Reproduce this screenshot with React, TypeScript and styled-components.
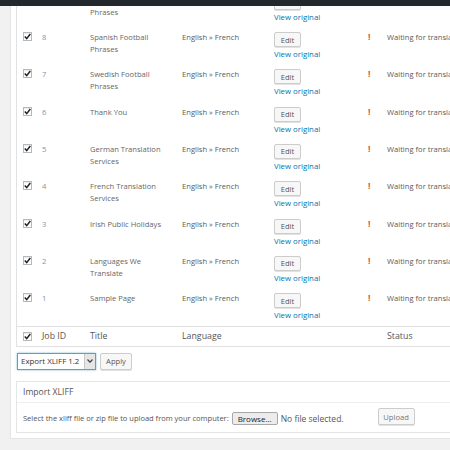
import React from "react";
import styled, { createGlobalStyle } from "styled-components";

const GlobalStyle = createGlobalStyle`
  html, body {
    margin: 0;
    padding: 0;
    background: #f1f1f1;
    overflow: hidden;
  }
  body {
    font-family: "Open Sans", "Liberation Sans", sans-serif;
    color: #555;
  }
`;

const AdminBar = styled.div`
  position: fixed;
  top: 0;
  left: 0;
  right: 0;
  height: 6px;
  background: #23282d;
  z-index: 10;
`;

const Page = styled.div`
  width: 450px;
  height: 450px;
  overflow: hidden;
  padding-left: 10px;
  box-sizing: border-box;
`;

const Panel = styled.div`
  width: 640px;
  margin-top: -10.33px;
  background: #fff;
  border-left: 1px solid #e5e5e5;
  border-bottom: 1px solid #e5e5e5;
  padding: 0 0 5px 5px;
`;

const Table = styled.div`
  border-left: 1px solid #e1e1e1;
`;

const cols = "21px 48px 92px 92px 94px 19px 1fr";

const Row = styled.div`
  display: grid;
  grid-template-columns: ${cols};
  height: 37.33px;
  align-items: start;
`;

const FootRow = styled.div`
  display: grid;
  grid-template-columns: ${cols};
  height: 21px;
  box-sizing: border-box;
  align-items: center;
  border-top: 1px solid #e1e1e1;
  border-bottom: 1px solid #e1e1e1;
  font-size: 8.8px;
  color: #555;
`;

const Cell = styled.div<{ $tone?: string }>`
  padding: 4px 4px 0;
  font-size: 7.6px;
  line-height: 12px;
  white-space: pre;
  color: ${(p) => p.$tone || "#5a5a5a"};
`;

const HeadCell = styled.div`
  padding: 0 4px;
  white-space: nowrap;
`;

const CheckCell = styled.div<{ $top?: number }>`
  padding: ${(p) => p.$top ?? 0}px 0 0 6px;
  display: flex;
`;

const Box = styled.span`
  width: 9px;
  height: 9px;
  box-sizing: border-box;
  border: 1px solid #b4b9be;
  background: #fff;
  display: flex;
  align-items: center;
  justify-content: center;
  box-shadow: inset 0 1px 1px rgba(0, 0, 0, 0.08);
`;

const ActionCell = styled.div`
  padding: 5px 4px 0;
  display: flex;
  flex-direction: column;
  align-items: flex-start;
`;

const Button = styled.span<{ $w: number; $h: number; $color?: string }>`
  display: inline-flex;
  align-items: center;
  justify-content: center;
  width: ${(p) => p.$w}px;
  height: ${(p) => p.$h}px;
  box-sizing: border-box;
  border: 1px solid #ccc;
  border-radius: 2px;
  background: #f7f7f7;
  box-shadow: 0 1px 0 #e2e2e2;
  font-size: 7.6px;
  color: ${(p) => p.$color || "#555"};
`;

const ViewLink = styled.span`
  margin-top: 2px;
  font-size: 7.8px;
  line-height: 11px;
  color: #0073aa;
  white-space: nowrap;
`;

const Mark = styled.div`
  padding: 4px 4px 0;
  font-size: 8.5px;
  line-height: 12px;
  font-weight: 700;
  color: #e14d43;
`;

const Bulk = styled.div`
  display: flex;
  gap: 4px;
  margin: 6px 0 0 1px;
`;

const Select = styled.div`
  display: flex;
  width: 79px;
  height: 17px;
  box-sizing: border-box;
  border: 1px solid #5b9dd9;
  box-shadow: 0 0 2px rgba(30, 140, 190, 0.6);
  background: #fff;
`;

const SelectText = styled.span`
  flex: 1;
  padding-left: 3px;
  font-size: 7.9px;
  line-height: 15px;
  color: #333;
  white-space: nowrap;
  overflow: hidden;
`;

const Arrow = styled.span`
  width: 10px;
  background: #e6e6e6;
  border-left: 1px solid #c8c8c8;
  display: flex;
  align-items: center;
  justify-content: center;
`;

const ImportBox = styled.div`
  margin-top: 11px;
  border: 1px solid #e5e5e5;
`;

const ImportHead = styled.div`
  height: 20px;
  line-height: 20px;
  padding-left: 6px;
  border-bottom: 1px solid #eee;
  font-size: 8.6px;
  color: #555;
`;

const ImportBody = styled.div`
  height: 29px;
  display: flex;
  align-items: center;
  padding: 2px 0 0 6px;
  box-sizing: border-box;
  font-size: 7.5px;
  color: #555;
  white-space: nowrap;
`;

const Browse = styled.span`
  margin-left: 3px;
  width: 46px;
  height: 13px;
  box-sizing: border-box;
  display: inline-flex;
  align-items: center;
  justify-content: center;
  border: 1px solid #a8a8a8;
  border-radius: 2px;
  background: #ececec;
  color: #222;
  font-size: 8px;
`;

const NoFile = styled.span`
  margin-left: 3px;
  font-size: 8.5px;
  color: #555;
`;

const UploadWrap = styled.span`
  margin: 0 0 3px 34px;
  display: flex;
`;

type Job = { id: number; title: string };

const jobs: Job[] = [
  { id: 9, title: "German Football\nPhrases" },
  { id: 8, title: "Spanish Football\nPhrases" },
  { id: 7, title: "Swedish Football\nPhrases" },
  { id: 6, title: "Thank You" },
  { id: 5, title: "German Translation\nServices" },
  { id: 4, title: "French Translation\nServices" },
  { id: 3, title: "Irish Public Holidays" },
  { id: 2, title: "Languages We\nTranslate" },
  { id: 1, title: "Sample Page" },
];

const Check = () => (
  <Box>
    <svg width="7" height="7" viewBox="0 0 7 7">
      <path d="M0.8 3.6 L2.7 5.6 L6.3 1" stroke="#222" strokeWidth="1.5" fill="none" />
    </svg>
  </Box>
);

export default function App() {
  return (
    <>
      <GlobalStyle />
      <AdminBar />
      <Page>
        <Panel>
          <Table>
            {jobs.map((job) => (
              <Row key={job.id}>
                <CheckCell $top={5}>
                  <Check />
                </CheckCell>
                <Cell $tone="#8494a6">{job.id}</Cell>
                <Cell $tone="#666">{job.title}</Cell>
                <Cell>English » French</Cell>
                <ActionCell>
                  <Button $w={27} $h={15}>Edit</Button>
                  <ViewLink>View original</ViewLink>
                </ActionCell>
                <Mark>!</Mark>
                <Cell>Waiting for translator</Cell>
              </Row>
            ))}
            <FootRow>
              <CheckCell>
                <Check />
              </CheckCell>
              <HeadCell>Job ID</HeadCell>
              <HeadCell>Title</HeadCell>
              <HeadCell>Language</HeadCell>
              <HeadCell />
              <HeadCell />
              <HeadCell>Status</HeadCell>
            </FootRow>
          </Table>

          <Bulk>
            <Select>
              <SelectText>Export XLIFF 1.2</SelectText>
              <Arrow>
                <svg width="6" height="4" viewBox="0 0 6 4">
                  <path d="M0.5 0.5 L3 3.2 L5.5 0.5" stroke="#444" strokeWidth="1.2" fill="none" />
                </svg>
              </Arrow>
            </Select>
            <Button $w={32} $h={17}>Apply</Button>
          </Bulk>

          <ImportBox>
            <ImportHead>Import XLIFF</ImportHead>
            <ImportBody>
              Select the xliff file or zip file to upload from your computer:
              <Browse>Browse...</Browse>
              <NoFile>No file selected.</NoFile>
              <UploadWrap>
                <Button $w={37} $h={17} $color="#777">Upload</Button>
              </UploadWrap>
            </ImportBody>
          </ImportBox>
        </Panel>
      </Page>
    </>
  );
}
